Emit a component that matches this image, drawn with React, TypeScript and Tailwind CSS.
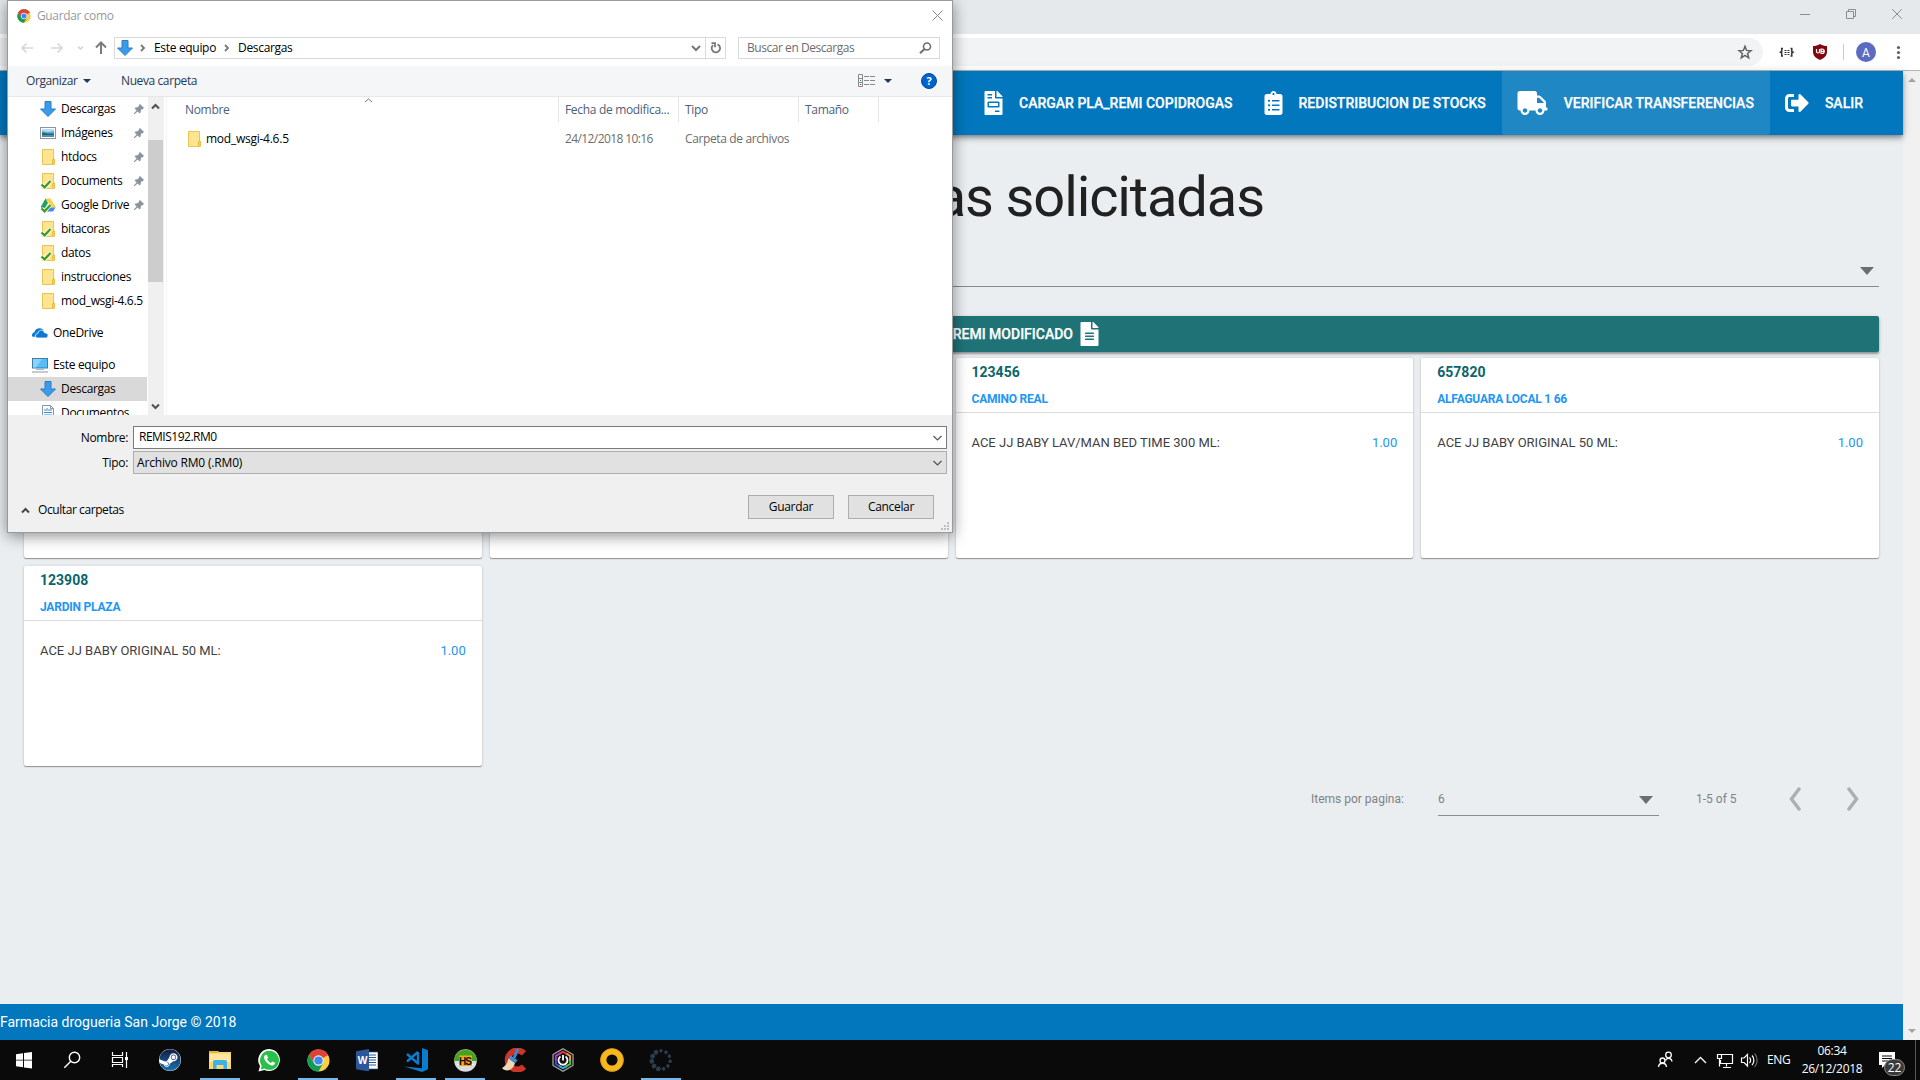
import React from "react";
import {
  FaFileInvoice,
  FaClipboardList,
  FaTruck,
  FaSignOutAlt,
  FaFileAlt,
  FaSteam,
} from "react-icons/fa";

/* ---------- shared icons ---------- */

function Chrome({ size }: { size: number }) {
  return (
    <svg width={size} height={size} viewBox="0 0 24 24" className="shrink-0">
      <circle cx="12" cy="12" r="11.5" fill="#ffcd40" />
      <path d="M12 12 L2.04 6.25 A11.5 11.5 0 0 1 21.96 6.25 Z" fill="#db4437" />
      <path d="M12 6.5 H22.2 A11.5 11.5 0 0 0 2.04 6.25 L7 14 Z" fill="#db4437" />
      <path d="M2.04 6.25 A11.5 11.5 0 0 0 12 23.5 L16.8 14.8 L12 17.2 L7.2 14.7 Z" fill="#0f9d58" />
      <circle cx="12" cy="12" r="5.4" fill="#f1f1f1" />
      <circle cx="12" cy="12" r="4.3" fill="#4285f4" />
    </svg>
  );
}

function DownArrow() {
  return (
    <svg width="16" height="16" viewBox="0 0 16 16" className="shrink-0">
      <path d="M5 .5h6v7.500h4.500L8 15.500.5 8H5z" fill="#3a9bea" stroke="#2a7fc4" strokeWidth="1" />
    </svg>
  );
}

function Folder({ check = false }: { check?: boolean }) {
  return (
    <svg width="16" height="16" viewBox="0 0 16 16" className="shrink-0">
      <path d="M2.500.5h11v9.500h1v5.500h-12z" fill="#ffe591" stroke="#ecc44f" />
      <path d="M12.500 15V10.500h1.500V15" fill="#ffe591" stroke="#e8bd3e" />
      {check && (
        <>
          <path d="M1.500 11.500l3 3L10.500 8" fill="none" stroke="#fff" strokeWidth="4" />
          <path d="M1.500 11.500l3 2.800L10.500 8" fill="none" stroke="#3f9b1c" strokeWidth="2.300" />
        </>
      )}
    </svg>
  );
}

function Picture() {
  return (
    <svg width="16" height="16" viewBox="0 0 16 16" className="shrink-0">
      <rect x=".5" y="2.500" width="15" height="11" fill="#fff" stroke="#8e959b" />
      <rect x="2" y="4" width="12" height="8" fill="#5fa9e6" />
      <path d="M2 4h12v2L8 7 2 6z" fill="#b7dbf5" />
      <path d="M2 7.500c3 0 4 1.500 12 1V10H2z" fill="#2f6a53" />
      <path d="M2 10h12v2H2z" fill="#4a8fc0" />
    </svg>
  );
}

function Drive() {
  return (
    <svg width="16" height="16" viewBox="0 0 16 16" className="shrink-0">
      <path d="M5.500 1.500h5L16 10.500h-5z" fill="#ffcf48" />
      <path d="M5.500 1.500L8 6 3.500 14 .8 9.800z" fill="#1fa463" />
      <path d="M6.500 10.500H15.500L13 14.500H4z" fill="#4688f4" />
      <path d="M1.500 11.500l3 3L10.500 7.500" fill="none" stroke="#fff" strokeWidth="4" />
      <path d="M1.500 11.500l3 2.800L10.500 8" fill="none" stroke="#3f9b1c" strokeWidth="2.300" />
    </svg>
  );
}

function OneDrive() {
  return (
    <svg width="16" height="16" viewBox="0 0 16 16" className="shrink-0">
      <path d="M0 10.500c0-2 1-3 2.500-3.200C3 4.500 5.500 3 8 3.200c1.500.1 3 1 3.500 2.300L5 11.800H1.500C.5 11.800 0 11.200 0 10.500z" fill="#0a78d4" />
      <path d="M3.500 11c0-1.800 1.200-2.600 2.400-2.700C6.200 6 8 5 9.500 5.200c1.600.1 2.700 1.100 3 2.600 2.200-.1 3.500 1.200 3.500 2.700 0 1.500-1 2.500-2.300 2.500H5.500c-1.200 0-2-.9-2-2z" fill="#0a78d4" stroke="#fff" strokeWidth=".8" />
    </svg>
  );
}

function Computer() {
  return (
    <svg width="16" height="16" viewBox="0 0 16 16" className="shrink-0">
      <rect x=".5" y="1.500" width="15" height="9.500" fill="#55bdf8" stroke="#3f7ea6" />
      <path d="M1 2h9l-6 8.500H1z" fill="#8bd3fb" />
      <path d="M4 12.500h8" stroke="#aab4bc" />
      <path d="M0 15h16" stroke="#8796a3" />
    </svg>
  );
}

function Document() {
  return (
    <svg width="16" height="16" viewBox="0 0 16 16" className="shrink-0">
      <path d="M2.500.5h8l3 3v12h-11z" fill="#fff" stroke="#8e959b" />
      <path d="M10.500.5v3h3" fill="none" stroke="#8e959b" />
      <path d="M4 5h2M7 3v3M4 7.500h8M4 10h8M8 5h4" stroke="#2f8fd8" />
    </svg>
  );
}

function Pin() {
  return (
    <svg width="10" height="10" viewBox="0 0 10 10" className="shrink-0">
      <path d="M6 0L10 4 9 5 8.200 4.900 6.800 6.500 6.600 8.700 5.500 9.300 3.600 7.400.8 10H0V9.200L2.600 6.400.7 4.500 1.300 3.400 3.500 3.200 5.100 1.800 5 1z" fill="#8a959e" />
    </svg>
  );
}

function Chevron({ d, w, h, color, sw = 1.5 }: { d: string; w: number; h: number; color: string; sw?: number }) {
  return (
    <svg width={w} height={h} viewBox={`0 0 ${w} ${h}`} className="shrink-0">
      <path d={d} fill="none" stroke={color} strokeWidth={sw} />
    </svg>
  );
}

/* ---------- browser ---------- */

function BrowserChrome() {
  return (
    <header className="shrink-0">
      <div className="flex h-[34px] justify-end bg-[#e5e9ec]">
        <svg width="138" height="28" viewBox="0 0 138 28" fill="none" stroke="#8a8d8f">
          <path d="M18 14.500h10" />
          <path d="M64.500 11.500h7v7h-7zM66.500 11.500v-2h7v7h-2" />
          <path d="M110.200 9.200l9.600 9.600M119.800 9.200l-9.600 9.600" />
        </svg>
      </div>
      <div className="flex h-[37px] items-center border-b border-[#b3b4b5] bg-white">
        <div className="flex h-7 w-[1763px] items-center justify-end rounded-r-full bg-[#f1f3f4] pr-[10px]">
          <svg width="16" height="16" viewBox="0 0 16 16">
            <path d="M8 2.300l1.600 4.100 4.400.3-3.400 2.800 1.100 4.300L8 11.400l-3.700 2.400 1.100-4.300L2 6.700l4.400-.3z" fill="none" stroke="#5f6368" strokeWidth="1.500" />
          </svg>
        </div>
        <svg width="157" height="32" viewBox="0 0 157 32">
          <g fill="none" stroke="#333" strokeWidth="1.500">
            <path d="M20 12.500h-1.300v3l-1.200.7 1.200.7v3H20M27.500 12.500h1.300v3l1.200.7-1.200.7v3h-1.300" />
            <path d="M21.500 14.500h2M24.500 14.500h2M21.500 16.500h2M24.500 16.500h2M21.500 18.500h2M24.500 18.500h2" strokeWidth="1" />
          </g>
          <path d="M57 8c2.500 1.600 4.500 2 7 2v5.500c0 4.500-3 6.800-7 8.500-4-1.700-7-4-7-8.500V10c2.500 0 4.500-.4 7-2z" fill="#800610" />
          <path d="M53.500 13v2.500a1.500 1.500 0 0 0 3 0V13M58 13v4.500h1a2.200 2.200 0 0 0 0-4.500zM58.500 15.300h2" fill="none" stroke="#fff" strokeWidth="1.200" />
          <path d="M80.500 8v16" stroke="#c9cbcd" />
          <circle cx="103" cy="16" r="10" fill="#5c6bc0" />
          <text x="103" y="20.500" textAnchor="middle" fontSize="12" fill="#fff" fontFamily="Roboto">A</text>
          <g fill="#5f6368">
            <circle cx="135.500" cy="11.500" r="1.600" />
            <circle cx="135.500" cy="16.500" r="1.600" />
            <circle cx="135.500" cy="21.500" r="1.600" />
          </g>
        </svg>
      </div>
    </header>
  );
}

const navItems = [
  { icon: FaFileInvoice, size: "w-[19px]", label: "CARGAR PLA_REMI COPIDROGAS", active: false },
  { icon: FaClipboardList, size: "w-[19px]", label: "REDISTRIBUCION DE STOCKS", active: false },
  { icon: FaTruck, size: "w-[31px]", label: "VERIFICAR TRANSFERENCIAS", active: true },
  { icon: FaSignOutAlt, size: "w-6", label: "SALIR", active: false },
];

function NavBar() {
  return (
    <nav className="relative flex h-16 shrink-0 justify-end bg-[#0277bd] pr-6 shadow-[0_2px_4px_-1px_rgba(0,0,0,.3),0_4px_5px_rgba(0,0,0,.18),0_1px_10px_rgba(0,0,0,.14)]">
      {navItems.map(({ icon: Icon, size, label, active }) => (
        <a
          key={label}
          className={`flex items-center gap-4 rounded-[2px] pr-4 pl-[15px] text-sm font-medium whitespace-nowrap text-white ${active ? "bg-[#2087c5]" : ""}`}
        >
          <Icon className={`h-6 shrink-0 ${size}`} />
          <span className="[-webkit-text-stroke:0.25px_white]">{label}</span>
        </a>
      ))}
    </nav>
  );
}

interface CardData {
  id: string;
  store: string;
  item: string;
}

function Card({ data }: { data: CardData | null }) {
  return (
    <article className="h-[200px] rounded-[2px] bg-white shadow-[0_1px_1px_rgba(0,0,0,.35),0_0_3px_rgba(0,0,0,.14)]">
      {data && (
        <>
          <div className="flex h-[55px] flex-col border-b border-[#dcdcdc] px-4 font-bold">
            <span className="mt-[4px] text-sm leading-5 text-[#0a666b]">{data.id}</span>
            <span className="mt-[7px] text-xs leading-5 tracking-[-0.22px] text-[#2196f3]">{data.store}</span>
          </div>
          <div className="mt-[20px] flex justify-between px-4 text-[13px] leading-5">
            <span className="text-[#3f3f3f]">{data.item}</span>
            <span className="text-[#2196f3]">1.00</span>
          </div>
        </>
      )}
    </article>
  );
}

const cards: (CardData | null)[] = [
  null,
  null,
  { id: "123456", store: "CAMINO REAL", item: "ACE JJ BABY LAV/MAN BED TIME 300 ML:" },
  { id: "657820", store: "ALFAGUARA LOCAL 1 66", item: "ACE JJ BABY ORIGINAL 50 ML:" },
  { id: "123908", store: "JARDIN PLAZA", item: "ACE JJ BABY ORIGINAL 50 ML:" },
];

function Paginator() {
  return (
    <div className="flex h-[66px] items-center justify-end text-xs text-[#808284]">
      <span className="w-[127px]">Items por pagina:</span>
      <div className="flex h-[34px] w-[221px] items-center justify-between border-b border-[#8a8c8e] pr-[6px]">
        <span>6</span>
        <svg width="14" height="8" viewBox="0 0 14 8" className="mt-[2px]"><path d="M0 0h14L7 8z" fill="#6c6e70" /></svg>
      </div>
      <span className="ml-[37px] w-[93px]">1-5 of 5</span>
      <svg width="12" height="24" viewBox="0 0 12 24" fill="none" stroke="#adb0b2" strokeWidth="3.500" strokeLinecap="round">
        <path d="M10 2L2.500 12 10 22" />
      </svg>
      <span className="w-[46px]" />
      <svg width="12" height="24" viewBox="0 0 12 24" fill="none" stroke="#adb0b2" strokeWidth="3.500" strokeLinecap="round">
        <path d="M2 2l7.500 10L2 22" />
      </svg>
      <span className="w-[20px]" />
    </div>
  );
}

function WebPage() {
  return (
    <div className="flex min-h-0 flex-1">
      <div className="flex flex-1 flex-col bg-[#eaeef1] font-[Roboto,sans-serif]">
        <NavBar />
        <main className="flex flex-1 flex-col px-6">
          <h1 className="mt-[34px] text-center text-[56px] leading-[56px] tracking-[-1.12px] text-[#212121]">
            Transferencias solicitadas
          </h1>
          <div className="mt-[26px] flex h-[36px] items-center justify-end border-b border-[#87898b] pr-[5px]">
            <svg width="14" height="8" viewBox="0 0 14 8" className="mt-[4px]"><path d="M0 0h14L7 8z" fill="#6c6e70" /></svg>
          </div>
          <button className="mt-[29px] flex h-9 shrink-0 items-center justify-end gap-[7px] rounded-[2px] bg-[#1f7377] pr-[780px] text-sm font-medium text-white shadow-[0_2px_2px_rgba(0,0,0,.3),0_1px_4px_rgba(0,0,0,.15)]">
            <span className="[-webkit-text-stroke:0.25px_white]">REMI MODIFICADO</span>
            <FaFileAlt className="h-6 w-[19px] shrink-0" />
          </button>
          <section className="mt-[6px] grid grid-cols-4 gap-2">
            {cards.map((c, i) => (
              <Card key={i} data={c} />
            ))}
          </section>
          <Paginator />
        </main>
        <footer className="flex h-9 shrink-0 items-center bg-[#0277bd] text-sm text-white">
          Farmacia drogueria San Jorge © 2018
        </footer>
      </div>
      <div className="flex w-[17px] flex-col items-center justify-between bg-[#f1f1f1] py-[7px]">
        <svg width="8" height="4" viewBox="0 0 8 4"><path d="M0 4L4 0l4 4z" fill="#a3a3a3" /></svg>
        <svg width="8" height="4" viewBox="0 0 8 4"><path d="M0 0l4 4 4-4z" fill="#a3a3a3" /></svg>
      </div>
    </div>
  );
}

/* ---------- save dialog ---------- */

const quickAccess: { icon: React.ReactNode; label: string; pin?: boolean }[] = [
  { icon: <DownArrow />, label: "Descargas", pin: true },
  { icon: <Picture />, label: "Imágenes", pin: true },
  { icon: <Folder />, label: "htdocs", pin: true },
  { icon: <Folder check />, label: "Documents", pin: true },
  { icon: <Drive />, label: "Google Drive", pin: true },
  { icon: <Folder check />, label: "bitacoras" },
  { icon: <Folder check />, label: "datos" },
  { icon: <Folder />, label: "instrucciones" },
  { icon: <Folder />, label: "mod_wsgi-4.6.5" },
];

function TreeRow({ icon, label, pin, root, selected }: { icon: React.ReactNode; label: string; pin?: boolean; root?: boolean; selected?: boolean }) {
  return (
    <div className={`flex h-6 shrink-0 items-center whitespace-nowrap ${root ? "pl-6" : "pl-8"} ${selected ? "bg-[#d9d9d9]" : ""}`}>
      {icon}
      <span className="ml-[5px] flex-1">{label}</span>
      {pin && <span className="mr-[3px]"><Pin /></span>}
    </div>
  );
}

function SaveDialog() {
  return (
    <div className="absolute top-0 left-[7px] flex h-[533px] w-[946px] flex-col border border-[#9a9a9a] bg-white font-['Open_Sans','Noto_Sans',sans-serif] text-xs tracking-[-0.32px] text-black shadow-[0_3px_14px_rgba(0,0,0,.45)]">
      <div className="flex h-[29px] shrink-0 items-center pl-[9px]">
        <Chrome size={14} />
        <span className="ml-[6px] flex-1 tracking-[-0.37px] text-[#999]">Guardar como</span>
        <svg width="11" height="11" viewBox="0 0 11 11" className="mr-[9px]">
          <path d="M.5.5l10 10M10.500.5l-10 10" stroke="#888" />
        </svg>
      </div>
      <div className="mt-[7px] flex h-[22px] shrink-0 items-center">
        <svg width="106" height="22" viewBox="0 0 106 22" fill="none" strokeWidth="1.600">
          <path d="M14 11h11M18.500 6.500L14 11l4.500 4.500" stroke="#d6d6d6" />
          <path d="M43 11h11M49.500 6.500L54 11l-4.500 4.500" stroke="#d6d6d6" />
          <path d="M70 9.500l2.500 2.500L75 9.500" stroke="#d6d6d6" />
          <path d="M93 17V6M88 10.500L93 5.500l5 5" stroke="#7b7b7b" strokeWidth="2" />
        </svg>
        <div className="flex h-[22px] w-[612px] items-center border border-[#d9d9d9]">
          <span className="ml-[2px] flex"><DownArrow /></span>
          <span className="ml-[7px] flex"><Chevron d="M1 1l3 3-3 3" w={6} h={8} color="#777" sw={1.8} /></span>
          <span className="ml-[8px] w-[70px]">Este equipo</span>
          <Chevron d="M1 1l3 3-3 3" w={6} h={8} color="#777" sw={1.8} />
          <span className="ml-[8px] flex-1">Descargas</span>
          <Chevron d="M1 1l4 4 4-4" w={10} h={7} color="#777" sw={2} />
          <span className="ml-[4px] flex h-5 w-5 items-center justify-center border-l border-[#d9d9d9]">
            <svg width="12" height="12" viewBox="0 0 12 12" fill="none" stroke="#777" strokeWidth="1.800">
              <path d="M7.500 2.300a4.200 4.200 0 1 1-4.500.8" />
              <path d="M1.500 1.200H5v4" />
            </svg>
          </span>
        </div>
        <div className="ml-[12px] flex h-[22px] w-[202px] items-center justify-between border border-[#d9d9d9] pr-[7px] pl-[8px] tracking-[-0.45px] text-[#6d6d6d]">
          <span>Buscar en Descargas</span>
          <svg width="13" height="12" viewBox="0 0 13 12" fill="none" stroke="#6d6d6d">
            <circle cx="8" cy="4.500" r="3.500" strokeWidth="1.600" />
            <path d="M5.500 7L1 11.200" strokeWidth="2" />
          </svg>
        </div>
      </div>
      <div className="mt-[7px] flex h-[31px] shrink-0 items-center border-b border-[#e6e7e8] bg-[#f5f6f7] tracking-[-0.4px] text-[#1e395b]">
        <span className="ml-[18px] w-[57px]">Organizar</span>
        <svg width="8" height="4" viewBox="0 0 8 4"><path d="M0 0h8L4 4z" fill="#1e395b" /></svg>
        <span className="ml-[30px] flex-1">Nueva carpeta</span>
        <svg width="17" height="14" viewBox="0 0 17 14" fill="none" stroke="#8a8a8a">
          <path d="M.5.500h4v12h-4zM.5 4.500h4M.5 8.500h4" />
          <path d="M6 2.500h11M6 6.500h11M6 10.500h11" strokeDasharray="5 1" />
          <path d="M2 6.500h1" stroke="#2a78d6" /><path d="M2 10.500h1" stroke="#d33" />
        </svg>
        <svg width="8" height="4" viewBox="0 0 8 4" className="ml-[9px]"><path d="M0 0h8L4 4z" fill="#1e395b" /></svg>
        <span className="mr-[15px] ml-[29px] flex h-4 w-4 items-center justify-center rounded-full border border-[#0a4a94] bg-[#0063cf] text-[11px] font-bold tracking-normal text-white">?</span>
      </div>
      <div className="flex h-[318px] shrink-0">
        <div className="flex w-[139px] flex-col overflow-hidden">
          {quickAccess.map((r) => <TreeRow key={r.label} {...r} />)}
          <div className="mt-2"><TreeRow root icon={<OneDrive />} label="OneDrive" /></div>
          <div className="mt-2"><TreeRow root icon={<Computer />} label="Este equipo" /></div>
          <TreeRow selected icon={<DownArrow />} label="Descargas" />
          <TreeRow icon={<Document />} label="Documentos" />
        </div>
        <div className="ml-px flex w-4 flex-col bg-[#f0f0f0]">
          <span className="flex h-[43px] pt-[6px] pl-[3px]"><Chevron d="M1 5.500l3.500-3.500L8 5.500" w={9} h={7} color="#505050" sw={2} /></span>
          <span className="h-[142px] w-[15px] bg-[#cdcdcd]" />
          <span className="flex flex-1 items-end pb-[5px] pl-[3px]"><Chevron d="M1 1.500L4.500 5 8 1.500" w={9} h={7} color="#505050" sw={2} /></span>
        </div>
        <div className="ml-[2px] flex-1 border-l border-[#f3f3f3]">
          <div className="flex h-[25px] items-center text-[#4c607a]">
            <span className="relative flex h-full w-[392px] items-center border-r border-[#e5e5e5] pl-[18px]">
              Nombre
              <span className="absolute top-px left-[197px]"><Chevron d="M1 4l3.500-3 3.500 3" w={9} h={5} color="#777" sw={1} /></span>
            </span>
            <span className="flex h-full w-[120px] items-center border-r border-[#e5e5e5] pl-[6px] whitespace-nowrap">Fecha de modifica...</span>
            <span className="flex h-full w-[120px] items-center border-r border-[#e5e5e5] pl-[6px]">Tipo</span>
            <span className="flex h-full w-[80px] items-center border-r border-[#e5e5e5] pl-[6px]">Tamaño</span>
          </div>
          <div className="mt-[5px] flex h-6 items-center text-[#6d6d6d]">
            <span className="flex w-[398px] items-center gap-[4px] pl-[19px] tracking-[-0.25px] text-black"><Folder />mod_wsgi-4.6.5</span>
            <span className="w-[120px] tracking-[-0.6px]">24/12/2018 10:16</span>
            <span className="tracking-[-0.37px]">Carpeta de archivos</span>
          </div>
        </div>
      </div>
      <div className="relative flex flex-1 flex-col bg-[#f0f0f0] pt-[11px]">
        <div className="flex h-[23px] items-center">
          <span className="w-[120px] text-right">Nombre:</span>
          <div className="ml-[5px] flex h-[23px] w-[814px] items-center justify-between border border-[#7a7a7a] bg-white pr-[4px] pl-[5px]">
            <span className="-mt-[2px] tracking-[-0.5px]">REMIS192.RM0</span>
            <Chevron d="M.5 1l4 4 4-4" w={9} h={6} color="#555" sw={1.2} />
          </div>
        </div>
        <div className="mt-[2px] flex h-[23px] items-center">
          <span className="w-[120px] text-right">Tipo:</span>
          <div className="ml-[5px] flex h-[23px] w-[814px] items-center justify-between border border-[#adadad] bg-[#e1e1e1] pr-[4px] pl-[3px]">
            <span className="tracking-[-0.18px]">Archivo RM0 (.RM0)</span>
            <Chevron d="M.5 1l4 4 4-4" w={9} h={6} color="#555" sw={1.2} />
          </div>
        </div>
        <div className="mt-[21px] flex h-6 items-center">
          <span className="ml-[13px] mt-[6px] flex"><Chevron d="M1 5.500l3.500-3.500L8 5.500" w={9} h={7} color="#444" sw={2} /></span>
          <span className="mt-[6px] ml-[8px] flex-1 tracking-[-0.42px]">Ocultar carpetas</span>
          <span className="flex h-6 w-[86px] items-center justify-center border border-[#adadad] bg-[#e1e1e1]">Guardar</span>
          <span className="mr-[18px] ml-[14px] flex h-6 w-[86px] items-center justify-center border border-[#adadad] bg-[#e1e1e1]">Cancelar</span>
        </div>
        <svg width="8" height="8" viewBox="0 0 8 8" className="absolute right-[3px] bottom-[2px]" fill="#bfbfbf">
          <path d="M6 0h2v2H6zM6 3h2v2H6zM6 6h2v2H6zM3 3h2v2H3zM3 6h2v2H3zM0 6h2v2H0z" />
        </svg>
      </div>
    </div>
  );
}

/* ---------- taskbar ---------- */

function TaskIcon({ children, running = false }: { children: React.ReactNode; running?: boolean }) {
  return (
    <div className={`mr-[9px] flex h-10 w-10 shrink-0 items-center justify-center border-b-2 pt-[2px] ${running ? "border-[#76b9ed]" : "border-transparent"}`}>
      {children}
    </div>
  );
}

const hexColors = ["#e23b3b", "#f2a531", "#57c443", "#2fb7d9", "#3f51d8", "#b03bd0"];

function Taskbar() {
  return (
    <div className="flex h-10 shrink-0 items-center bg-[#0a0a0a] text-white">
      <svg width="151" height="40" viewBox="0 0 151 40" className="shrink-0">
        <path d="M16 14.300l7-1v6.500h-7zM24 13.100l8-1.100v7.800h-8zM16 20.600h7v6.600l-7-1zM24 20.600h8V28.500l-8-1.100z" fill="#fff" />
        <g fill="none" stroke="#fff">
          <circle cx="74.500" cy="17.500" r="5.200" strokeWidth="1.400" />
          <path d="M70.800 21.200L64.300 27.700" strokeWidth="1.400" />
          <path d="M112.500 12v3.500h10V12M112.500 27v-2.500h10V27M112.500 17.500h10v5h-10zM126.500 12v16" strokeWidth="1.200" />
        </g>
        <path d="M125 17h3v3h-3z" fill="#fff" />
      </svg>
      <TaskIcon>
        <span className="relative -left-px flex h-[22px] w-[22px] rounded-full bg-white">
          <svg width="0" height="0" className="absolute">
            <linearGradient id="steam" x1="0" y1="0" x2="0" y2="1">
              <stop offset="0" stopColor="#131c46" />
              <stop offset="1" stopColor="#1873ad" />
            </linearGradient>
          </svg>
          <FaSteam className="h-[22px] w-[22px] fill-[url(#steam)] [&_path]:fill-[url(#steam)]" />
        </span>
      </TaskIcon>
      <TaskIcon running>
        <svg width="22" height="20" viewBox="0 0 22 20">
          <path d="M0 1h9l1 1h12v17H0z" fill="#f8d775" />
          <path d="M0 1h9l1 2H0z" fill="#e8b43c" />
          <path d="M1 4h20v8H1z" fill="#ffe79b" />
          <path d="M4 19v-8l1.500-1h11l1.500 1v8h-3.500v-4h-7v4z" fill="#3fb1e6" />
        </svg>
      </TaskIcon>
      <TaskIcon>
        <svg width="23" height="23" viewBox="0 0 23 23">
          <path d="M11.500 0A11 11 0 0 0 2 17L.5 22.500 6.300 21A11 11 0 1 0 11.500 0z" fill="#fff" />
          <path d="M11.500 1.800A9.500 9.500 0 0 0 3.700 16.700l-1 3.700 3.800-1A9.500 9.500 0 1 0 11.500 1.800z" fill="#28c04a" />
          <path d="M8 5.800c-1.200.2-2.300 1.500-1.800 3.400.8 3 3.700 6.300 7.500 7.200 1.700.3 3.300-.8 3.300-2.600l-2.700-1.400-1.400 1.500c-1.800-.7-3.200-2.200-3.900-3.800l1.100-1.300L9 5.900z" fill="#fff" />
        </svg>
      </TaskIcon>
      <TaskIcon running><Chrome size={23} /></TaskIcon>
      <TaskIcon>
        <svg width="22" height="22" viewBox="0 0 22 22">
          <rect x="11" y="3" width="11" height="17" fill="#fff" stroke="#2b579a" strokeWidth=".7" />
          <path d="M13 6h7M13 8.500h7M13 11h7M13 13.500h7M13 16h7" stroke="#2b579a" strokeWidth="1.200" />
          <path d="M0 2.300L13 0v22.500L0 20.200z" fill="#2b579a" />
          <text x="6.500" y="15" textAnchor="middle" fontSize="10" fontWeight="700" fill="#fff" fontFamily="Open Sans">W</text>
        </svg>
      </TaskIcon>
      <TaskIcon running>
        <svg width="24" height="24" viewBox="0 0 24 24">
          <path d="M18 0l6 2.300v19L18 24 0 18.500 18 20.300z" fill="#0a7dd0" />
          <path d="M14 4v11.500L3 6M14 4L3 13.500" fill="none" stroke="#0a7dd0" strokeWidth="2.400" strokeLinejoin="round" />
        </svg>
      </TaskIcon>
      <TaskIcon running>
        <svg width="23" height="23" viewBox="0 0 23 23">
          <circle cx="11.500" cy="11.500" r="11.300" fill="#dcdcdc" />
          <path d="M.2 12a11.300 11.300 0 0 1 22.600 0z" fill="#43a51d" />
          <path d="M3 15.500h17" stroke="#fff" />
          <rect x="5" y="6.500" width="13" height="10.500" fill="#f3a623" />
          <text x="11.500" y="15.500" textAnchor="middle" fontSize="10" fontWeight="700" fill="#111" fontFamily="Liberation Sans" textLength="13">HS</text>
        </svg>
      </TaskIcon>
      <TaskIcon>
        <svg width="24" height="24" viewBox="0 0 24 24">
          <path d="M23 4.800A9.500 9.500 0 1 0 23 18.200" fill="none" stroke="#cf3428" strokeWidth="6" transform="translate(-1 .5)" />
          <path d="M15.500 2L12.500 9" stroke="#2f8fdc" strokeWidth="2.800" strokeLinecap="round" />
          <path d="M8.500 7.500l7 4.500-2 3-7-4.500z" fill="#3f8fd0" />
          <path d="M6.500 10.500l6.500 4.500c-1 4-4 7.500-8 7.500-2 0-4-1-5-2.500 3-1.500 5.500-5 6.500-9.500z" fill="#f1d7b4" />
        </svg>
      </TaskIcon>
      <TaskIcon>
        <svg width="24" height="24" viewBox="0 0 24 24" fill="none">
          <path d="M12 .8l10 5.700v11L12 23.200 2 17.500v-11z" fill="#111" stroke="#aaa" strokeWidth="1.200" />
          {hexColors.map((c, i) => (
            <path key={c} d="M8.500 5.600L12 3.800l4.500 2.600" stroke={c} strokeWidth="1.900" transform={`rotate(${i * 60} 12 12)`} />
          ))}
          <path d="M9.500 8.500a4.500 4.500 0 1 0 5 0M12 7v5.500" stroke="#fff" strokeWidth="1.800" />
        </svg>
      </TaskIcon>
      <TaskIcon>
        <svg width="24" height="24" viewBox="0 0 24 24" fill="none">
          <circle cx="12" cy="12" r="8.600" stroke="#f8b71d" strokeWidth="6" />
          <circle cx="12" cy="12" r="11.400" stroke="#d99a13" strokeWidth=".8" />
        </svg>
      </TaskIcon>
      <TaskIcon running>
        <svg width="24" height="24" viewBox="0 0 24 24" fill="#2b3c4d">
          {Array.from({ length: 11 }, (_, i) => (
            <circle key={i} cx="12" cy="2.800" r={i > 5 ? 2.4 : 1.8} transform={`rotate(${i * 32.7} 12 12)`} />
          ))}
        </svg>
      </TaskIcon>
      <div className="flex h-full flex-1 items-center justify-end font-['Open_Sans','Noto_Sans',sans-serif] text-xs tracking-[-0.3px]">
        <svg width="110" height="40" viewBox="0 0 110 40" fill="none" stroke="#fff" strokeWidth="1.300">
          <circle cx="19.500" cy="15" r="2.800" />
          <path d="M16.500 20.500c1-3 6-3 6.500 1" />
          <circle cx="13.500" cy="20.500" r="2.500" />
          <path d="M9.500 27c.5-5 7.500-5 8 0" />
          <path d="M46 23l5.500-5.500L57 23" />
          <path d="M73 14.500h10.500v9H71.500v-3.500M77.500 23.500v3M74 27.500h8M68.500 14.500h4v4h-4zM70.500 18.500v8" strokeWidth="1.200" />
          <path d="M92.500 18v4.500H95l3.500 3.500V14.500L95 18zM100.500 17.500c1.500 1.500 1.500 4 0 5.500M103 15.500c2.500 2.500 2.500 7 0 9.500" strokeWidth="1.200" />
          <path d="M105.500 13.500c3.500 3.500 3.500 10 0 13.500" stroke="#666" />
        </svg>
        <span className="ml-[8px] w-[24px]">ENG</span>
        <span className="ml-[10px] flex w-[62px] flex-col items-center leading-[18px] whitespace-nowrap">
          <span>06:34</span>
          <span>26/12/2018</span>
        </span>
        <svg width="57" height="40" viewBox="1 0 57 40">
          <path d="M17 12h16v13H23l-3 3v-3h-3z" fill="#fff" />
          <path d="M20 16h10M20 18.500h10M20 21h6" stroke="#0a0a0a" />
          <rect x="22.500" y="19.500" width="20" height="16" rx="8" fill="#3a3a3a" stroke="#8a8a8a" />
          <text x="32.500" y="32" textAnchor="middle" fontSize="12" fill="#fff" fontFamily="Open Sans" letterSpacing="0">22</text>
          <path d="M53.500 0v40" stroke="#555" />
        </svg>
      </div>
    </div>
  );
}

export default function App() {
  return (
    <div className="relative flex h-[1080px] w-[1920px] flex-col overflow-hidden">
      <BrowserChrome />
      <WebPage />
      <Taskbar />
      <SaveDialog />
    </div>
  );
}
